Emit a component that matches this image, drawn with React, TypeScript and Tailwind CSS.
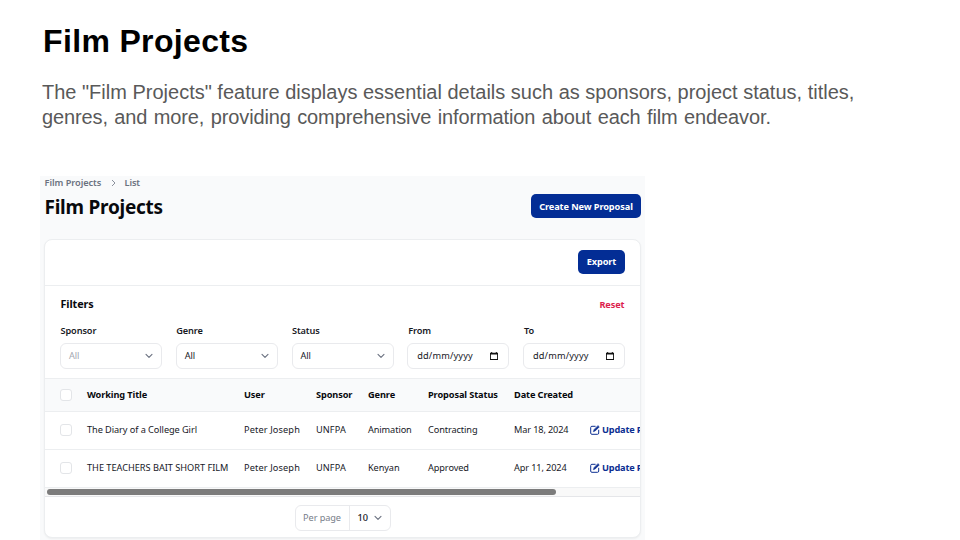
import React from 'react';

const columns = 'grid grid-cols-[42px_157px_72px_52px_60px_86px_76px_120px] items-center';

function Chevron({ className = '' }: { className?: string }) {
  return (
    <svg className={className} width="8" height="6" viewBox="0 0 8 6" fill="none" stroke="#6b7280" strokeWidth="1.1" strokeLinecap="round" strokeLinejoin="round">
      <path d="M1 1.3 4 4.4 7 1.3" />
    </svg>
  );
}

function CalendarIcon() {
  return (
    <svg width="8" height="8" viewBox="0 0 8 8" fill="#111">
      <path fillRule="evenodd" d="M1.2 0h1v.7h3.6V0h1v.7H8V8H0V.7h1.2zM.9 2.5v4.6h6.2V2.5z" />
    </svg>
  );
}

function EditIcon() {
  return (
    <svg width="10" height="10" viewBox="0 0 10 10" fill="none" stroke="#0c2f92" strokeWidth="1" strokeLinecap="round" strokeLinejoin="round">
      <path d="M5.2 1.3H1.9a1.2 1.2 0 0 0-1.2 1.2v5.6a1.2 1.2 0 0 0 1.2 1.2h5.6a1.2 1.2 0 0 0 1.2-1.2V5.2" />
      <path fill="#0c2f92" strokeWidth=".5" d="M8.1.7 9.3 1.9 5.2 6 3.3 6.7 4 4.8z" />
    </svg>
  );
}

function Checkbox() {
  return <span className="ml-[15px] block size-[12px] rounded-[3px] border border-[#e3e5e8] bg-white" />;
}

function SelectField({ label, value, muted }: { label: string; value: string; muted?: boolean }) {
  return (
    <div className="w-[102px]">
      <div className="h-[18px] pl-[0.5px] text-[9.2px] leading-[12px] font-semibold">{label}</div>
      <div className="flex h-[26px] items-center justify-between rounded-[6px] border border-[#e9eaed] bg-white pr-[8px] pl-[8px]">
        <span className={muted ? 'text-[#a3a8b1]' : ''}>{value}</span>
        <Chevron />
      </div>
    </div>
  );
}

function DateField({ label }: { label: string }) {
  return (
    <div className="w-[102px]">
      <div className="h-[18px] pl-[1px] text-[9.2px] leading-[12px] font-semibold">{label}</div>
      <div className="flex h-[26px] items-center justify-between rounded-[6px] border border-[#e9eaed] bg-white pr-[10px] pl-[9px]">
        <span className="tracking-[0.15px]">dd/mm/yyyy</span>
        <CalendarIcon />
      </div>
    </div>
  );
}

interface Project {
  title: string;
  titleClass: string;
  genre: string;
  status: string;
  date: string;
}

const projects: Project[] = [
  { title: 'The Diary of a College Girl', titleClass: 'tracking-[-0.07px]', genre: 'Animation', status: 'Contracting', date: 'Mar 18, 2024' },
  { title: 'THE TEACHERS BAIT SHORT FILM', titleClass: 'tracking-[-0.02px]', genre: 'Kenyan', status: 'Approved', date: 'Apr 11, 2024' },
];

function ProjectRow({ project }: { project: Project }) {
  return (
    <div className={`${columns} h-[38px] border-b border-[#eceef0] pb-px`}>
      <Checkbox />
      <span className={project.titleClass}>{project.title}</span>
      <span className="tracking-[0.13px]">Peter Joseph</span>
      <span className="tracking-[0.08px]">UNFPA</span>
      <span>{project.genre}</span>
      <span>{project.status}</span>
      <span className="tracking-[-0.13px]">{project.date}</span>
      <span className="flex items-center gap-[2px] font-bold tracking-[-0.16px] text-[#0c2f92]">
        <EditIcon />
        Update Proposal
      </span>
    </div>
  );
}

export default function App() {
  return (
    <main className="h-[540px] w-[960px] overflow-hidden bg-white">
      <header className="h-[176px] pt-[22px] pl-[42px] font-['Liberation_Sans',Arial,sans-serif]">
        <h1 className="h-[57px] pl-px text-[32px] leading-[38px] font-bold tracking-[0.35px] text-black">Film Projects</h1>
        <p className="origin-top scale-y-[1.05] pb-2 text-[20px] leading-[24px] whitespace-nowrap text-[#595959]">
          <span className="block">The "Film Projects" feature displays essential details such as sponsors, project status, titles,</span>
          <span className="block tracking-[-0.12px] [word-spacing:1px]">genres, and more, providing comprehensive information about each film endeavor.</span>
        </p>
      </header>

      <section className="ml-[40px] h-[364px] w-[605px] bg-[#f9fafb] pr-[4px] pl-[4px] font-['Noto_Sans','Open_Sans',sans-serif] text-[9.2px] leading-[12px] tracking-[-0.1px] whitespace-nowrap text-[#17191f]">
        <nav className="flex h-[13px] items-center pl-[0.5px] font-semibold text-[#6b7280]">
          <span className="w-[66px] tracking-[-0.04px]">Film Projects</span>
          <svg className="mr-[9px]" width="5" height="8" viewBox="0 0 5 8" fill="none" stroke="#8b919c" strokeWidth="1">
            <path d="M1 1 4 4 1 7" />
          </svg>
          <span>List</span>
        </nav>
        <div className="flex h-[50px] items-start justify-between pt-[5px]">
          <h2 className="pt-px pl-[0.5px] text-[19px] leading-[25px] font-bold tracking-[-0.25px] text-[#08090d]">Film Projects</h2>
          <button className="h-[24px] w-[110px] rounded-[5px] bg-[#032d95] pt-px font-bold text-white">Create New Proposal</button>
        </div>

        <div className="h-[299px] overflow-hidden rounded-[8px] border border-[#eceef0] bg-white shadow-xs">
          <div className="flex h-[46px] items-center justify-end border-b border-[#eceef0] pr-[15px] pb-px">
            <button className="h-[24px] w-[47px] rounded-[5px] bg-[#032d95] font-bold text-white">Export</button>
          </div>

          <div className="h-[93px] border-b border-[#eceef0] px-[15px] pt-[11px]">
            <div className="flex h-[28px] items-start justify-between font-bold">
              <h3 className="pl-[0.5px] text-[10.8px] leading-[14px] text-[#08090d]">Filters</h3>
              <span className="pr-[0.5px] leading-[16px] text-[#dc1f4e]">Reset</span>
            </div>
            <div className="flex justify-between">
              <SelectField label="Sponsor" value="All" muted />
              <SelectField label="Genre" value="All" />
              <SelectField label="Status" value="All" />
              <DateField label="From" />
              <DateField label="To" />
            </div>
          </div>

          <div className={`${columns} h-[33px] border-b border-[#eceef0] bg-[#f9fafb] font-bold text-[#08090d]`}>
            <Checkbox />
            <span>Working Title</span>
            <span>User</span>
            <span>Sponsor</span>
            <span>Genre</span>
            <span>Proposal Status</span>
            <span>Date Created</span>
          </div>
          {projects.map((project) => (
            <ProjectRow key={project.title} project={project} />
          ))}
          <div className="h-[9px] border-b border-[#e5e6e9] bg-[#f9f9f9] pt-px pl-[2px]">
            <div className="h-[6px] w-[509px] rounded-full bg-[#7c7c7c]" />
          </div>

          <div className="flex h-[41px] items-center justify-center">
            <div className="flex h-[26px] w-[96px] items-center rounded-[6px] border border-[#e9eaed]">
              <span className="flex h-full w-[54px] items-center justify-center border-r border-[#e9eaed] text-[#777d89]">Per page</span>
              <span className="pl-[8px] font-medium">10</span>
              <Chevron className="ml-[6px]" />
            </div>
          </div>
        </div>
      </section>
    </main>
  );
}
